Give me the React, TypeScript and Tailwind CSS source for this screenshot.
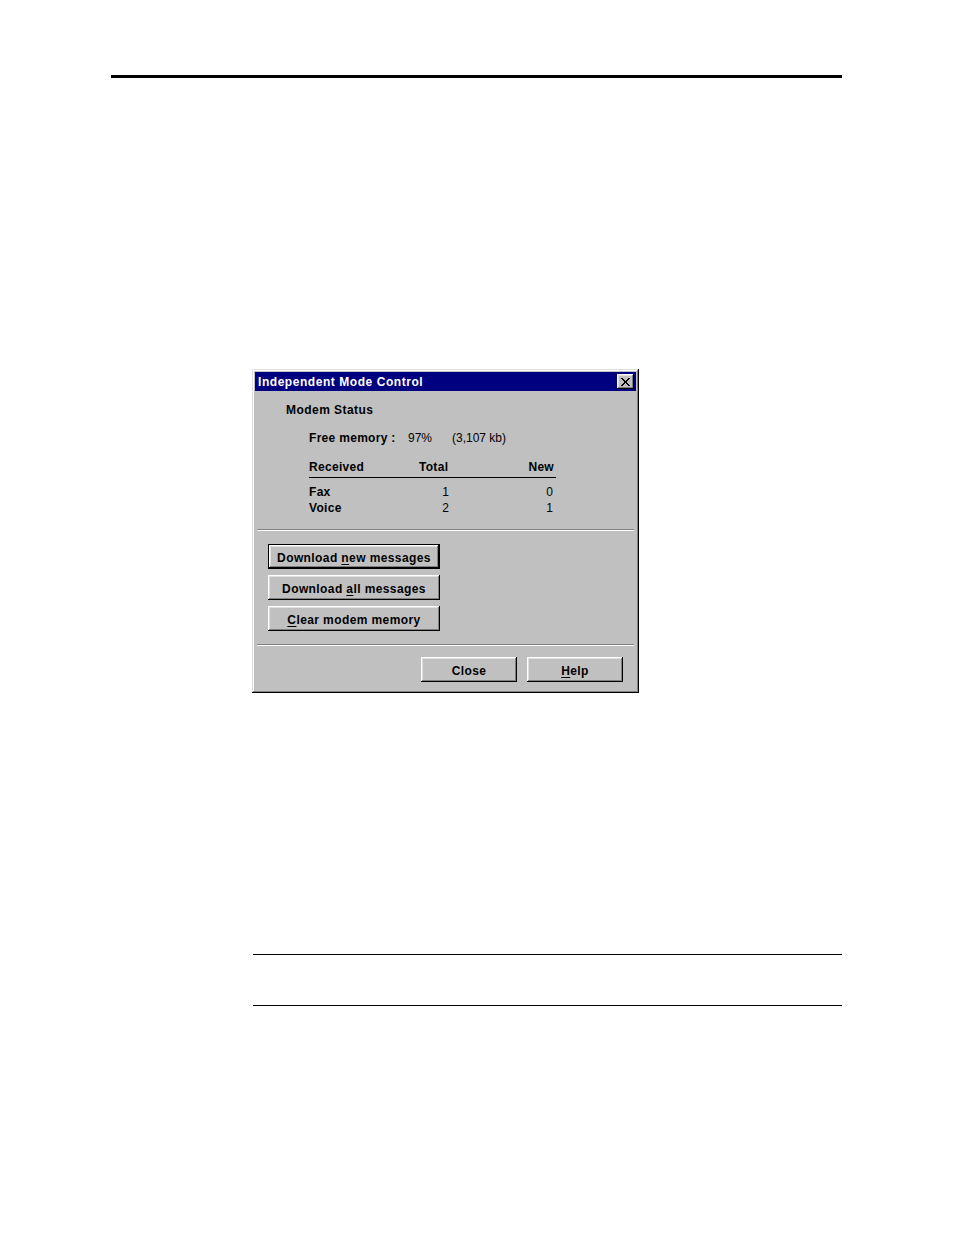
import type { ReactNode } from 'react'

const raised =
  'bg-[#c0c0c0] shadow-[inset_-1px_-1px_#000,inset_1px_1px_#fff,inset_-2px_-2px_#808080,inset_2px_2px_#dfdfdf]'

function U({ children }: { children: ReactNode }) {
  return <span className="underline underline-offset-[2px]">{children}</span>
}

function WinButton({
  children,
  width,
  isDefault,
}: {
  children: ReactNode
  width: string
  isDefault?: boolean
}) {
  return (
    <div className={`${width} h-[25px] ${isDefault ? 'border border-black' : ''}`}>
      <div
        className={`${raised} w-full h-full pt-[2px] flex items-center justify-center font-bold text-[12px] tracking-[0.4px] text-black`}
      >
        {children}
      </div>
    </div>
  )
}

function Separator() {
  return (
    <div className="mx-[2px]">
      <div className="h-px bg-[#808080]" />
      <div className="h-px bg-white" />
    </div>
  )
}

function Dialog() {
  return (
    <div className="w-[387px] h-[324px] p-[3px] bg-[#c0c0c0] shadow-[inset_-1px_-1px_#000,inset_1px_1px_#dfdfdf,inset_-2px_-2px_#808080,inset_2px_2px_#fff] flex flex-col">
      {/* title bar */}
      <div className="h-[19px] bg-[#000080] flex items-center justify-between pl-[3px] pr-[2px]">
        <span className="text-white font-bold text-[12px] tracking-[0.55px] pt-[1px]">Independent Mode Control</span>
        <div className={`${raised} w-[17px] h-[15px] flex items-center justify-center`}>
          <svg width="9" height="8" viewBox="0 0 9 8" shapeRendering="crispEdges">
            <path d="M0 0h2v1h-2zM7 0h2v1h-2zM1 1h2v1h-2zM6 1h2v1h-2zM2 2h2v1h-2zM5 2h2v1h-2zM3 3h3v1h-3zM3 4h3v1h-3zM2 5h2v1h-2zM5 5h2v1h-2zM1 6h2v1h-2zM6 6h2v1h-2zM0 7h2v1h-2zM7 7h2v1h-2z" fill="#000" />
          </svg>
        </div>
      </div>

      <div className="mt-[11px] pl-[31px] h-[16px] leading-[16px] font-bold text-[12px] tracking-[0.45px]">Modem Status</div>

      <div className="mt-[12px] pl-[54px] h-[16px] leading-[16px] text-[12px] flex">
        <span className="font-bold tracking-[0.3px] w-[99px]">Free memory :</span>
        <span className="w-[44px]">97%</span>
        <span>(3,107 kb)</span>
      </div>

      <div className="mt-[13px] ml-[54px] w-[247px] text-[12px]">
        <div className="flex h-[16px] leading-[16px] font-bold tracking-[0.3px]">
          <span className="w-[110px]">Received</span>
          <span className="w-[108px]">Total</span>
          <span className="flex-1 text-right pr-[2px]">New</span>
        </div>
        <div className="mt-[2px] h-px bg-black" />
        <div className="mt-[6px]">
          {[
            ['Fax', '1', '0'],
            ['Voice', '2', '1'],
          ].map(([label, total, fresh]) => (
            <div key={label} className="flex h-[16px] leading-[16px]">
              <span className="w-[110px] font-bold tracking-[0.3px]">{label}</span>
              <span className="w-[30px] text-right">{total}</span>
              <span className="flex-1 text-right pr-[3px]">{fresh}</span>
            </div>
          ))}
        </div>
      </div>

      <div className="mt-[13px]">
        <Separator />
      </div>

      <div className="mt-[13px] pl-[13px] flex flex-col gap-[6px]">
        <WinButton width="w-[172px]" isDefault>
          <span>
            Download <U>n</U>ew messages
          </span>
        </WinButton>
        <WinButton width="w-[172px]">
          <span>
            Download <U>a</U>ll messages
          </span>
        </WinButton>
        <WinButton width="w-[172px]">
          <span>
            <U>C</U>lear modem memory
          </span>
        </WinButton>
      </div>

      <div className="mt-[13px]">
        <Separator />
      </div>

      <div className="mt-[11px] flex justify-end gap-[10px] pr-[13px]">
        <WinButton width="w-[96px]">Close</WinButton>
        <WinButton width="w-[96px]">
          <span>
            <U>H</U>elp
          </span>
        </WinButton>
      </div>
    </div>
  )
}

export default function App() {
  return (
    <div
      className="w-[954px] h-[1235px] bg-white overflow-hidden text-black"
      style={{ fontFamily: '"Liberation Sans", Arial, sans-serif' }}
    >
      <div className="mt-[75px] ml-[111px] w-[731px] h-[3px] bg-black" />
      <div className="mt-[291px] ml-[252px]">
        <Dialog />
      </div>
      <div className="mt-[261px] ml-[253px] w-[589px] h-px bg-black" />
      <div className="mt-[50px] ml-[253px] w-[589px] h-px bg-black" />
    </div>
  )
}
